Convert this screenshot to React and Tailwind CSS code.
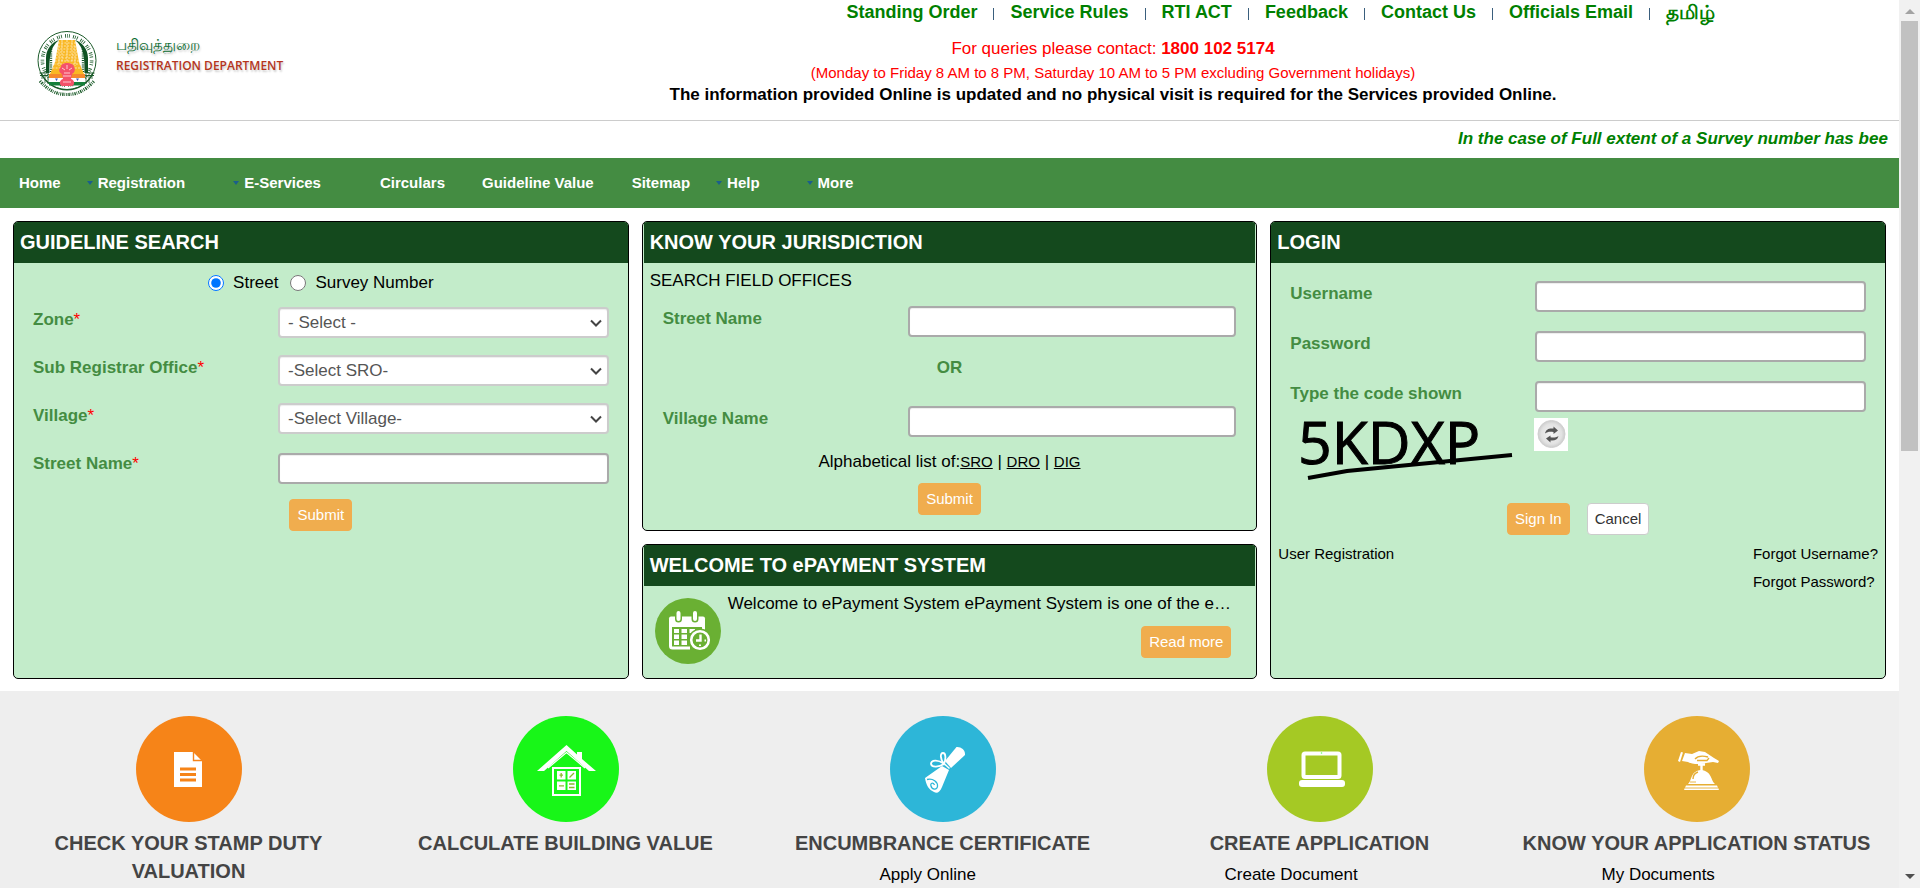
import React from "react";

const topLinks = ["Standing Order", "Service Rules", "RTI ACT", "Feedback", "Contact Us", "Officials Email"];

const navItems = [
  { label: "Home", space: "ml-[19px]" },
  { label: "Registration", space: "ml-[26px]", menu: true },
  { label: "E-Services", space: "ml-[48px]", menu: true },
  { label: "Circulars", space: "ml-[59px]" },
  { label: "Guideline Value", space: "ml-[37px]" },
  { label: "Sitemap", space: "ml-[38px]" },
  { label: "Help", space: "ml-[26px]", menu: true },
  { label: "More", space: "ml-[47px]", menu: true },
];

const fieldBase = "block w-full h-[31px] rounded border-2 bg-white shadow-[inset_0_1px_1px_rgba(0,0,0,0.075)]";
const orangeButton = "h-8 rounded border border-[#f0ad4e] bg-[#f0ad4e] px-[7px] text-[15px] text-white";

function Emblem() {
  return (
    <svg viewBox="0 0 60 66" className="h-[66px] w-[60px] shrink-0" aria-hidden="true">
      <circle cx="30" cy="29.5" r="29" fill="#fff" stroke="#1d5c2b" strokeWidth="1" />
      <path d="M4 42A28.500 28.500 0 0 0 56 42" fill="none" stroke="#1d5c2b" strokeWidth="1.4" />
      <circle cx="30" cy="29.5" r="24.6" fill="none" stroke="#1d5c2b" strokeWidth="3.6" strokeDasharray=".9 1 .7 1.300 .8 3.2" pathLength="150" />
      <path d="M9 42V27C9 18 15 11 22 9C15 15 12 22 12.500 42Z M51 42V27C51 18 45 11 38 9C45 15 48 22 47.500 42Z" fill="#0f5223" />
      <path d="M14 18V41M46 18V41" stroke="#0f5223" strokeWidth="2.400" strokeDasharray="1 1.200" />
      <path d="M22 9H38L42 31L47 43H13L18 31Z" fill="#f9b824" />
      <path d="M21 12H39M20.500 15H39.500M20 18H40M19.600 21H40.400M19 24H41M18.400 27H41.600M17.600 30H42.400M16.500 33H43.500M15.400 37H44.600M25 9V30M30 9V30M35 9V30M22 15V35M38 15V35" stroke="#fff" strokeWidth=".6" strokeDasharray="2 1.2" fill="none" />
      <path d="M2.500 42H12M57.500 42H48M3 44.500H11M57 44.500H49" stroke="#1d5c2b" fill="none" strokeWidth="1" />
      <path d="M5 43V48M8 43V52M11 43V53M55 43V48M52 43V52M49 43V53" stroke="#1d5c2b" strokeWidth=".8" />
      <path d="M12 43H48V47H12Z" fill="#f58a2c" />
      <path d="M12 47H48V51H12Z" fill="#fff" />
      <path d="M12 51H48V54.500H12Z" fill="#14803a" />
      <path d="M18 47.500H21L19.500 50ZM39 47.500H42L40.500 50Z" fill="#4357c4" />
      <path d="M24 36C24 33 27 32 30 32C33 32 37 33 37 36C39 39 37 42 35 43L34 48C38 49 38 54 35 55H25C22 54 22 49 26 48L25 43C22 42 21 38 24 36Z" fill="#f4526a" />
      <path d="M25 37L28 39M30 34V38M35 37L32 39M27 42H33M26 45H34M26 51H34" stroke="#ffd6dc" strokeWidth=".9" />
      <path d="M3 50C12 60 20 63.500 30 63.500C40 63.500 48 60 57 50" fill="none" stroke="#1d5c2b" strokeWidth="3.2" strokeDasharray="1 1 1.400 .9 .7 1.100" />
    </svg>
  );
}

function CalendarIcon() {
  return (
    <svg viewBox="0 0 66 66" className="mt-3 h-[66px] w-[66px] shrink-0" aria-hidden="true">
      <circle cx="33" cy="33" r="33" fill="#6ab033" />
      <path d="M16 18.5H48Q50 18.5 50 20.5V29H14V20.5Q14 18.5 16 18.5Z" fill="#fff" />
      <path d="M15.5 27V48Q15.5 50 17.5 50H35" fill="none" stroke="#fff" strokeWidth="3" />
      <path d="M48.5 27V33" stroke="#fff" strokeWidth="3" />
      <path d="M23.5 15V21M40 15V21" stroke="#6ab033" strokeWidth="7" strokeLinecap="round" />
      <path d="M23.5 15V21M40 15V21" stroke="#fff" strokeWidth="4" strokeLinecap="round" />
      <path d="M19 31H24V35H19ZM26.500 31H32V35H26.500ZM34.500 31H40V35H34.500ZM19 36.500H24V41H19ZM26.500 36.500H32V41H26.500ZM19 42.500H24V47H19ZM26.500 42.500H32V47H26.500Z" fill="#fff" />
      <circle cx="45" cy="42" r="11.500" fill="#6ab033" />
      <circle cx="45" cy="42" r="8.800" fill="none" stroke="#fff" strokeWidth="2.600" />
      <path d="M45.500 36.500V42.500H41" fill="none" stroke="#fff" strokeWidth="2.400" />
      <path d="M49.500 42.500H51M45 46.500V48" stroke="#fff" strokeWidth="2" />
    </svg>
  );
}

function RefreshIcon() {
  return (
    <svg viewBox="0 0 34 33" className="h-[33px] w-[34px]" aria-hidden="true">
      <defs>
        <radialGradient id="knob">
          <stop offset="0" stopColor="#f4f4f4" />
          <stop offset=".75" stopColor="#e2e2e2" />
          <stop offset="1" stopColor="#cccccc" />
        </radialGradient>
      </defs>
      <circle cx="17.500" cy="16" r="13.500" fill="url(#knob)" stroke="#d0d0d0" />
      <path d="M11 15.500C12 11 15 10 19.500 10.500V8.500L24 12.500L19.500 16V14C16 13.500 13.500 13.500 11 15.500Z" fill="#555" />
      <path d="M24.500 18C23.500 22 20.500 23 16.500 22.500V24.500L12 20.500L16.500 17.500V19.300C19.500 20 22 19.500 24.500 18Z" fill="#555" />
    </svg>
  );
}

function DocumentGlyph() {
  return (
    <>
      <path d="M38 36H57L66 45V71H38Z" fill="#fff" />
      <path d="M57.500 36V44.500H66" fill="none" stroke="#f68418" strokeWidth="1.400" />
      <path d="M44 53H60M44 58.500H60M44 64H60" stroke="#f68418" strokeWidth="3" />
    </>
  );
}

function HouseGlyph() {
  return (
    <>
      <path d="M24 55L53.500 29L64 38.500V36H69V43L83 55H76L53.500 35L31 55Z" fill="#fff" />
      <path d="M35 52L53.500 36.500L72 52" fill="none" stroke="#fff" strokeWidth="1.200" />
      <rect x="40" y="52" width="27" height="27" fill="none" stroke="#fff" strokeWidth="2" />
      <path d="M44 55H52.500V63.500H44ZM54.500 55H63V63.500H54.500ZM44 65.500H52.500V74H44ZM54.500 65.500H63V74H54.500Z" fill="#fff" />
      <path d="M48.200 57V61.500M46.500 59.200H50M46 69.800H51M56 68H61.500M56 71.500H61.500M56.500 61.500L61 57" stroke="#8cba2c" strokeWidth="1.300" />
    </>
  );
}

function ScrollGlyph() {
  return (
    <>
      <path d="M66.500 31C71 30.500 75.500 34 75 39L61 52L55 45Z" fill="#fff" />
      <path d="M52 50L59 54L52 71C50 76 47 78 44 76C39 74 36 69 35 62Z" fill="#fff" />
      <path d="M37 63.500C43 62 48 66 47.500 70.500C47 74 42 74 41 70C40 67 43 66 44.500 69" fill="none" stroke="#2db6d8" strokeWidth="1.300" />
      <path d="M54 48C50 43 50 37 53 37C56 37 56 43 54 48C48 43 41 44 41 48C42 52 49 51 54 48" fill="none" stroke="#fff" strokeWidth="1.800" />
      <path d="M54 47.500L59.500 52.500" stroke="#fff" strokeWidth="1.500" />
    </>
  );
}

function LaptopGlyph() {
  return (
    <>
      <rect x="36.500" y="37.500" width="36" height="23.500" rx="1.500" fill="none" stroke="#fff" strokeWidth="4" />
      <rect x="32" y="64" width="46" height="7" rx="3" fill="#fff" />
      <circle cx="54.500" cy="37" r=".8" fill="#6f6" />
    </>
  );
}

function BellGlyph() {
  return (
    <>
      <path d="M34 45L37 36L39 36.500L36 46Z" fill="#fff" />
      <path d="M38 45L41 37L48 38L55 35L61 36L70 42L75 45L74 47L69 46L62 47C56 49 47 48 44 46Z" fill="#fff" />
      <path d="M51 43C54 39.500 60 40 64 41M53 44.500H63L65 42" fill="none" stroke="#e6ae33" strokeWidth="1.300" />
      <path d="M54 48.500H61M57.500 48V57" stroke="#fff" strokeWidth="2.400" />
      <path d="M44 68C48 65 46 55 57 54C68 55 67 65 71 68ZM42 69.500H73L75 74H40Z" fill="#fff" />
      <path d="M49 63C49 59 51 57 54 56" fill="none" stroke="#e6ae33" strokeWidth="1.400" />
      <path d="M46 66H52M41 72H74" stroke="#e6ae33" strokeWidth=".9" />
    </>
  );
}

const services = [
  { title: "CHECK YOUR STAMP DUTY VALUATION", color: "fill-[#f68418]", Glyph: DocumentGlyph },
  { title: "CALCULATE BUILDING VALUE", color: "fill-[#18f618]", Glyph: HouseGlyph },
  { title: "ENCUMBRANCE CERTIFICATE", color: "fill-[#2db6d8]", Glyph: ScrollGlyph, link: "Apply Online", list: "min-w-[126px]" },
  { title: "CREATE APPLICATION", color: "fill-[#a5c924]", Glyph: LaptopGlyph, link: "Create Document", list: "min-w-[190px]" },
  { title: "KNOW YOUR APPLICATION STATUS", color: "fill-[#e6ae33]", Glyph: BellGlyph, link: "My Documents", list: "min-w-[190px]" },
];

function Card({ title, className = "", children }) {
  return (
    <section className={`overflow-hidden rounded-[5px] border border-black bg-[#c3ecca] ${className}`}>
      <h2 className="h-[41px] bg-[#14491d] px-[6px] text-[20px] font-bold leading-[40px] text-white">{title}</h2>
      {children}
    </section>
  );
}

function Row({ id, label, required, className = "", children }) {
  return (
    <div className={`grid grid-cols-[245px_1fr] px-[19px] ${className}`}>
      <label htmlFor={id} className="text-[17px] font-bold leading-[26px] text-[#448c42]">
        {label}
        {required && <span className="font-normal text-[#f00]">*</span>}
      </label>
      {children}
    </div>
  );
}

function TextField({ id, type = "text", className = "" }) {
  return <input id={id} type={type} className={`${fieldBase} border-[#aaa] px-2 text-[17px] ${className}`} />;
}

function SelectField({ id, text }) {
  return (
    <div className="relative h-[31px]">
      <select id={id} className={`${fieldBase} appearance-none border-[#ccc] px-2 text-[17px] text-[#555]`}>
        <option>{text}</option>
      </select>
      <svg viewBox="0 0 12 8" className="pointer-events-none absolute right-[7px] top-3 h-2 w-3" aria-hidden="true">
        <path d="M1 1.500L6 6.500L11 1.500" fill="none" stroke="#444" strokeWidth="2" />
      </svg>
    </div>
  );
}

export default function App() {
  return (
    <div className="flex h-screen overflow-hidden bg-white font-['Liberation_Sans',Arial,sans-serif] text-[17px] text-black">
      <div className="min-w-0 flex-1 overflow-hidden">
        <header className="flex h-[121px] border-b border-[#ccc]">
          <div className="flex w-[327px] shrink-0 pl-[37px] pt-[31px]">
            <Emblem />
            <div className="pl-[19px] pt-[3px] [text-shadow:1px_2px_2px_rgba(0,0,0,0.2)]">
              <p className="text-[15px] leading-[22px] text-[#0b6b30]">பதிவுத்துறை</p>
              <p className="whitespace-nowrap font-['Open_Sans',sans-serif] text-[12px] font-semibold leading-[20px] text-[#b5351c]">REGISTRATION DEPARTMENT</p>
            </div>
          </div>
          <div className="min-w-0 flex-1 text-center">
            <nav className="flex h-6 items-center justify-end gap-4 pr-[184px] text-[18px] font-bold text-[#008000]">
              {topLinks.map((t) => (
                <React.Fragment key={t}>
                  <a href="#">{t}</a>
                  <span className="mt-1 h-3 w-px bg-[#3a5f7d]" />
                </React.Fragment>
              ))}
              <a href="#" className="text-[20px] leading-6">தமிழ்</a>
            </nav>
            <p className="mt-[12px] leading-[26px] text-[#f00]">For queries please contact: <b>1800 102 5174</b></p>
            <p className="text-[15px] leading-[22px] text-[#f00]">(Monday to Friday 8 AM to 8 PM, Saturday 10 AM to 5 PM excluding Government holidays)</p>
            <p className="font-bold leading-[22px]">The information provided Online is updated and no physical visit is required for the Services provided Online.</p>
          </div>
        </header>

        <div className="h-[37px] overflow-hidden">
          <p className="ml-auto w-[441px] whitespace-nowrap font-bold italic leading-[36px] text-[#008000]">
            In the case of Full extent of a Survey number has bee
          </p>
        </div>

        <nav className="flex h-[50px] items-center bg-[#448c42] text-[15px] font-bold text-white">
          {navItems.map(({ label, space, menu }) => (
            <a key={label} href="#" className={`flex items-center gap-[5px] ${space}`}>
              {menu && <span className="border-x-[3px] border-t-4 border-x-transparent border-t-[#1b5e8c]" />}
              {label}
            </a>
          ))}
        </nav>

        <main className="grid grid-cols-3 gap-[13px] px-[13px] pb-3 pt-[13px]">
          <Card title="GUIDELINE SEARCH">
            <div className="flex h-[44px] items-center justify-center pb-1">
              <label className="flex items-center gap-[9px]">
                <input type="radio" name="searchBy" defaultChecked className="h-4 w-4" />
                Street
              </label>
              <label className="ml-3 flex items-center gap-[9px]">
                <input type="radio" name="searchBy" className="h-4 w-4" />
                Survey Number
              </label>
            </div>
            <Row id="zone" label="Zone" required className="h-12"><SelectField id="zone" text="- Select -" /></Row>
            <Row id="sro" label="Sub Registrar Office" required className="h-12"><SelectField id="sro" text="-Select SRO-" /></Row>
            <Row id="village" label="Village" required className="h-12"><SelectField id="village" text="-Select Village-" /></Row>
            <Row id="gStreet" label="Street Name" required className="h-12"><TextField id="gStreet" className="mt-0.5" /></Row>
            <div className="flex justify-center"><button type="button" className={orangeButton}>Submit</button></div>
          </Card>

          <div className="flex flex-col gap-[13px]">
            <Card title="KNOW YOUR JURISDICTION" className="px-px pb-[15px]">
              <p className="px-[6px] pt-[5px] leading-[26px]">SEARCH FIELD OFFICES</p>
              <Row id="jStreet" label="Street Name" className="mt-3"><TextField id="jStreet" /></Row>
              <p className="mt-[18px] text-center font-bold leading-[26px] text-[#448c42]">OR</p>
              <Row id="jVillage" label="Village Name" className="mt-[25px]"><TextField id="jVillage" /></Row>
              <p className="mt-3 text-center leading-[26px]">
                Alphabetical list of:<a href="#" className="text-[15px] underline">SRO</a> | <a href="#" className="text-[15px] underline">DRO</a> | <a href="#" className="text-[15px] underline">DIG</a>
              </p>
              <div className="mt-2 flex justify-center"><button type="button" className={orangeButton}>Submit</button></div>
            </Card>

            <Card title="WELCOME TO ePAYMENT SYSTEM" className="px-px">
              <div className="flex pb-[14px] pl-[11px]">
                <CalendarIcon />
                <div className="min-w-0 flex-1 pl-[7px] pr-[6px] pt-[5px]">
                  <p className="leading-[26px]">Welcome to ePayment System ePayment System is one of the e…</p>
                  <div className="mt-[9px] flex justify-end pr-[18px]"><button type="button" className={orangeButton}>Read more</button></div>
                </div>
              </div>
            </Card>
          </div>

          <Card title="LOGIN">
            <Row id="user" label="Username" className="mt-[18px] h-[50px]"><TextField id="user" /></Row>
            <Row id="pass" label="Password" className="h-[50px]"><TextField id="pass" type="password" /></Row>
            <Row id="code" label="Type the code shown"><TextField id="code" /></Row>
            <div className="flex gap-[17px] pl-[26px] pt-[6px]">
              <svg viewBox="0 0 220 66" className="h-[66px] w-[220px]" role="img" aria-label="Captcha">
                <text x="1" y="46" stroke="#000" strokeWidth="1" className="font-['Open_Sans',sans-serif] text-[59px]">5KDXP</text>
                <path d="M11 60L50 53L215 37" fill="none" stroke="#000" strokeWidth="4" />
              </svg>
              <button type="button" aria-label="Refresh code" className="h-[33px] w-[34px] bg-white"><RefreshIcon /></button>
            </div>
            <div className="mt-[19px] flex justify-center gap-[17px]">
              <button type="button" className={orangeButton}>Sign In</button>
              <button type="button" className="h-8 rounded border border-[#ccc] bg-white px-[7px] text-[15px] text-[#333]">Cancel</button>
            </div>
            <div className="flex items-start justify-between px-[7px] pt-[5px] text-[15px] leading-7">
              <a href="#">User Registration</a>
              <div className="flex flex-col">
                <a href="#">Forgot Username?</a>
                <a href="#">Forgot Password?</a>
              </div>
            </div>
          </Card>
        </main>

        <section className="grid grid-cols-5 bg-[#eee] pb-8 pr-[14px] pt-[25px]">
          {services.map(({ title, color, Glyph, link, list }) => (
            <article key={title} className="flex flex-col items-center px-3">
              <svg viewBox="0 0 106 106" className="h-[106px] w-[106px]" aria-hidden="true">
                <circle cx="53" cy="53" r="53" className={color} />
                <Glyph />
              </svg>
              <h3 className="mt-[7px] text-center text-[20px] font-bold leading-7 text-[#444]">{title}</h3>
              {link && (
                <ul className={`mt-[6px] leading-6 ${list}`}>
                  <li><a href="#">{link}</a></li>
                </ul>
              )}
            </article>
          ))}
        </section>
      </div>

      <aside aria-hidden="true" className="flex w-[21px] shrink-0 flex-col items-center bg-[#f1f1f1]">
        <span className="mt-[9px] border-x-[5px] border-b-[5px] border-x-transparent border-b-[#a3a3a3]" />
        <span className="mt-[7px] h-[430px] w-[17px] bg-[#c1c1c1]" />
        <span className="mb-[9px] mt-auto border-x-[5px] border-t-[5px] border-x-transparent border-t-[#505050]" />
      </aside>
    </div>
  );
}
